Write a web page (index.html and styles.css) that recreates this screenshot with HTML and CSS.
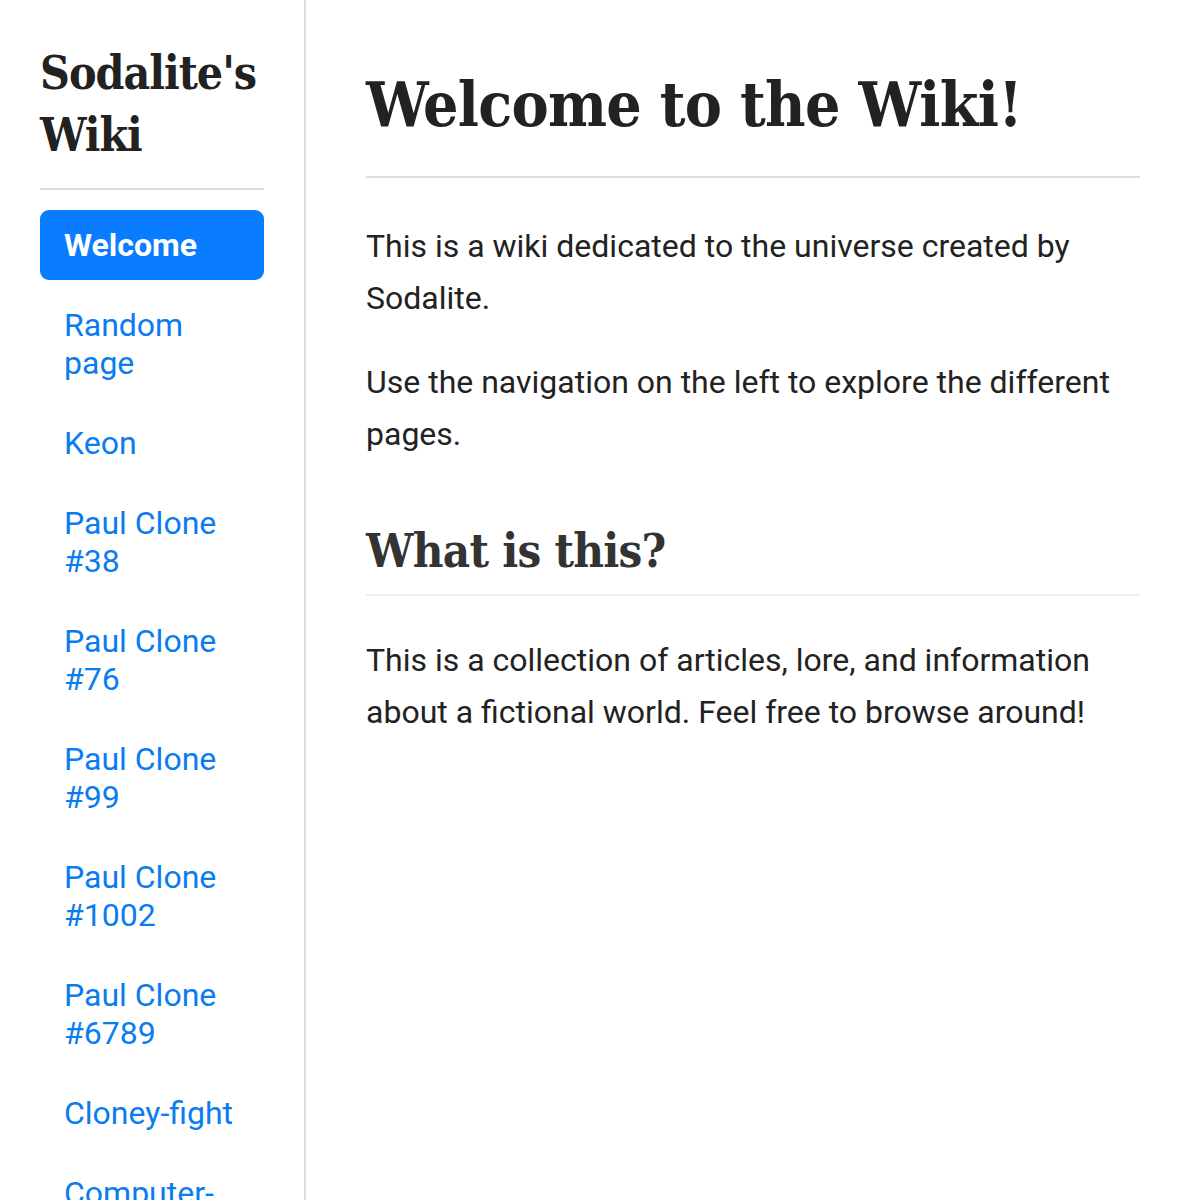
FILE: index.html
```html
<!DOCTYPE html>
<html lang="en">
<head>
<meta charset="utf-8">
<title>Sodalite's Wiki</title>
<link rel="stylesheet" href="styles.css">
</head>
<body>
<div class="layout">
  <aside class="sidebar">
    <h1 class="site-title">Sodalite's Wiki</h1>
    <hr class="side-rule">
    <nav class="nav">
      <a class="nav-item active" href="#">Welcome</a>
      <a class="nav-item" href="#">Random page</a>
      <a class="nav-item" href="#">Keon</a>
      <a class="nav-item" href="#">Paul Clone #38</a>
      <a class="nav-item" href="#">Paul Clone #76</a>
      <a class="nav-item" href="#">Paul Clone #99</a>
      <a class="nav-item" href="#">Paul Clone #1002</a>
      <a class="nav-item" href="#">Paul Clone #6789</a>
      <a class="nav-item" href="#">Cloney-fight</a>
      <a class="nav-item" href="#">Computer-generated</a>
    </nav>
  </aside>
  <main class="content">
    <h1 class="page-title">Welcome to the Wiki!</h1>
    <p>This is a wiki dedicated to the universe created by Sodalite.</p>
    <p>Use the navigation on the left to explore the different pages.</p>
    <h2 class="section-title">What is this?</h2>
    <p>This is a collection of articles, lore, and information about a fictional world. Feel free to browse around!</p>
  </main>
</div>
</body>
</html>
```
FILE: styles.css
```css
html, body {
  margin: 0;
  padding: 0;
  background: #ffffff;
}
body {
  font-family: Roboto, "Liberation Sans", sans-serif;
  color: #222222;
}
.layout {
  display: flex;
  align-items: stretch;
  min-height: 1200px;
}
.sidebar {
  width: 224px;
  flex: none;
  padding: 42px 40px 40px 40px;
  border-right: 2px solid #dddddd;
  height: 1158px;
  overflow: hidden;
}
.site-title {
  font-family: "DejaVu Serif Condensed", "DejaVu Serif", "Liberation Serif", serif;
  font-weight: bold;
  font-size: 46px;
  line-height: 62px;
  margin: 0 0 22px 0;
  color: #222222;
  letter-spacing: -1px;
}
.side-rule {
  border: 0;
  border-top: 2px solid #dddddd;
  margin: 0 0 20px 0;
}
.nav {
  display: flex;
  flex-direction: column;
  gap: 10px;
}
.nav-item {
  display: block;
  padding: 16px 24px;
  font-size: 32px;
  line-height: 38px;
  color: #0a7cf0;
  text-decoration: none;
  border-radius: 9px;
}
.nav-item.active {
  background: #0a7cff;
  color: #ffffff;
  font-weight: bold;
}
.content {
  flex: 1;
  padding: 60px 60px;
}
.page-title {
  font-family: "DejaVu Serif Condensed", "DejaVu Serif", "Liberation Serif", serif;
  font-weight: bold;
  font-size: 62px;
  line-height: 90px;
  margin: 0 0 42px 0;
  padding-bottom: 26px;
  border-bottom: 2px solid #dddddd;
  color: #222222;
  letter-spacing: -0.7px;
}
.content p {
  font-size: 32px;
  line-height: 52px;
  margin: 0 0 32px 0;
}
.section-title {
  font-family: "DejaVu Serif Condensed", "DejaVu Serif", "Liberation Serif", serif;
  font-weight: bold;
  font-size: 47px;
  line-height: 70px;
  margin: 56px 0 38px 0;
  padding-bottom: 8px;
  border-bottom: 2px solid #eeeeee;
  color: #333333;
  letter-spacing: -0.75px;
}
```
